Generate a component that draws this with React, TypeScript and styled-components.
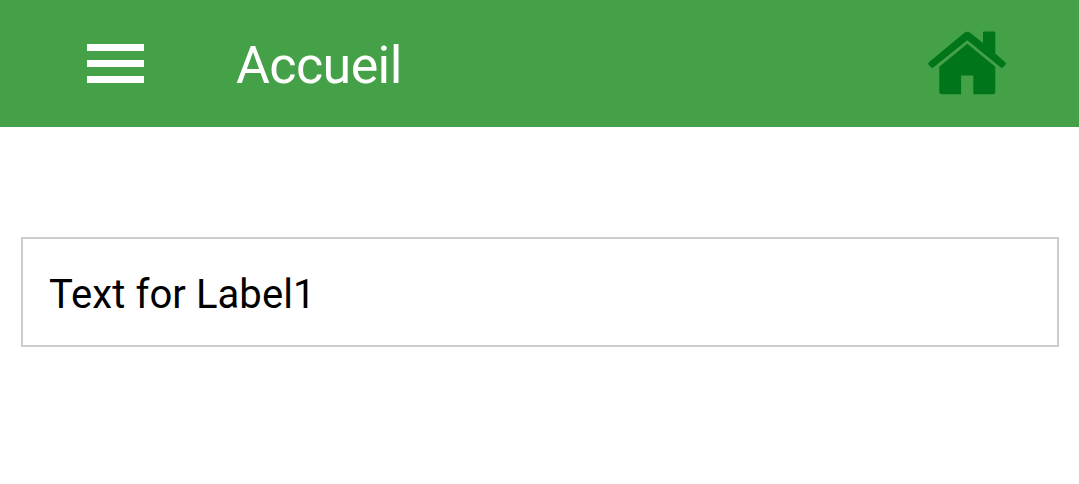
import styled, { createGlobalStyle } from 'styled-components';

const App = () => {
  return (
    <>
      <GlobalStyle />
      <Header>
        <MenuButton type="button" aria-label="Menu">
          <MenuLine />
          <MenuLine />
          <MenuLine />
        </MenuButton>
        <Title>Accueil</Title>
        <HomeButton type="button" aria-label="Accueil">
          <HomeIcon />
        </HomeButton>
      </Header>
      <Content>
        <LabelBox>
          <LabelText>Text for Label1</LabelText>
        </LabelBox>
      </Content>
    </>
  );
};

const HomeIcon = () => (
  <svg width="78" height="64" viewBox="0 0 78 64" fill="#00751a">
    <path d="M36.2 1.9Q39.3 -0.3 42.4 1.9L55 12V1.6Q55 0.6 56 0.6H66.3Q67.3 0.6 67.3 1.6V22.4L77.2 31.3Q78.5 32.6 77.4 33.8L75 36.2Q73.8 37.3 72.5 36.2L39.3 9.2L5.5 36.2Q4.2 37.3 3 36.2L0.7 33.8Q-0.4 32.6 0.9 31.3Z" />
    <path d="M39.3 12.8L67.3 35.8V61Q67.3 63.3 65 63.3H45.3V44.5H33.1V63.3H13.6Q11.3 63.3 11.3 61V35.8Z" />
  </svg>
);

export default App;

const GlobalStyle = createGlobalStyle`
  * {
    box-sizing: border-box;
  }

  body {
    margin: 0;
    background-color: #fff;
    font-family: Roboto, sans-serif;
  }
`;

const Header = styled.header`
  display: flex;
  align-items: center;
  height: 127px;
  padding: 0 73px 1px 87px;
  background-color: #45a147;
`;

const MenuButton = styled.button`
  display: flex;
  flex-direction: column;
  gap: 9px;
  margin-top: 1px;
  padding: 0;
  border: none;
  background: none;
`;

const MenuLine = styled.span`
  width: 57px;
  height: 7px;
  background-color: white;
`;

const Title = styled.h1`
  margin: 6px 0 0 92px;
  color: white;
  font-size: 52px;
  font-weight: 400;
  line-height: 60px;
  letter-spacing: -0.6px;
`;

const HomeButton = styled.button`
  display: flex;
  margin-left: auto;
  padding: 0;
  border: none;
  background: none;
`;

const Content = styled.main`
  padding: 110px 20px 0 21px;
`;

const LabelBox = styled.div`
  display: flex;
  align-items: center;
  height: 110px;
  padding: 6px 26px 0;
  border: 2px solid #ccc;
`;

const LabelText = styled.p`
  margin: 0;
  color: black;
  font-size: 40px;
  line-height: 48px;
  letter-spacing: 0.08px;
`;
